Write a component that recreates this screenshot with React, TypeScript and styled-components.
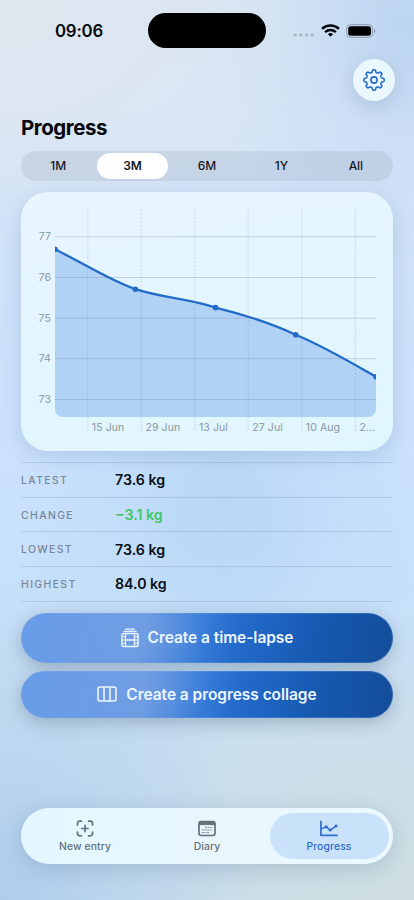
import React from 'react';
import styled, { createGlobalStyle } from 'styled-components';

const GlobalStyle = createGlobalStyle`
  *, *::before, *::after { box-sizing: border-box; }
  html, body { margin: 0; padding: 0; }
  body { font-family: Inter, "Liberation Sans", sans-serif; color: #06090f; }
  button { font: inherit; border: 0; padding: 0; background: none; color: inherit; }
  svg { display: block; flex: none; }
`;

const Screen = styled.div`
  display: flex;
  flex-direction: column;
  width: 414px;
  height: 900px;
  overflow: hidden;
  background:
    radial-gradient(ellipse 330px 240px at 0% 0%, rgba(224, 230, 238, 0.85), rgba(224, 230, 238, 0)),
    radial-gradient(ellipse 210px 240px at 100% 3%, rgba(184, 210, 240, 0.9), rgba(190, 214, 242, 0.35) 55%, rgba(200, 220, 246, 0)),
    radial-gradient(ellipse 200px 220px at 54% 57%, rgba(180, 214, 245, 0.85), rgba(186, 217, 247, 0.35) 60%, rgba(200, 224, 250, 0)),
    radial-gradient(ellipse 270px 320px at 0% 100%, rgba(172, 205, 236, 0.95), rgba(176, 207, 238, 0.45) 55%, rgba(190, 216, 242, 0)),
    radial-gradient(ellipse 360px 270px at 100% 100%, rgba(207, 223, 227, 0.95), rgba(207, 223, 230, 0)),
    linear-gradient(180deg, #d9e6f4 0%, #d8e6f6 13%, #cfe2f8 27%, #cbe1fc 50%, #c7e0f9 65%, #c9dff1 80%, #ccdfec 100%);
`;

const StatusBar = styled.header`
  display: grid;
  grid-template-columns: 148px 118px 1fr;
  height: 48px;
  padding-top: 13px;
`;

const Clock = styled.time`
  padding-left: 55px;
  font-size: 16.8px;
  line-height: 37px;
  font-weight: 600;
  letter-spacing: -0.2px;
`;

const Island = styled.div`
  height: 35px;
  border-radius: 18px;
  background: #000;
`;

const StatusIcons = styled.div`
  display: flex;
  align-items: center;
  gap: 6px;
  height: 35px;
  padding-left: 27px;
`;

const Toolbar = styled.div`
  display: flex;
  justify-content: flex-end;
  height: 64px;
  padding: 11px 19px 0 0;
`;

const RoundButton = styled.button`
  display: flex;
  align-items: center;
  justify-content: center;
  width: 42px;
  height: 42px;
  border-radius: 50%;
  color: #246bc9;
  background: #e9f7ff;
  box-shadow: 0 5px 18px rgba(70, 100, 140, 0.2);
`;

const Content = styled.main`
  display: flex;
  flex-direction: column;
  padding: 0 21px;
`;

const Title = styled.h1`
  margin: 0;
  height: 39px;
  font-size: 20.5px;
  line-height: 32px;
  font-weight: 700;
  letter-spacing: -0.45px;
  color: #05070c;
`;

const Segments = styled.div`
  display: grid;
  grid-template-columns: repeat(5, 1fr);
  height: 30px;
  padding: 2px 0;
  border-radius: 15px;
  background: rgba(120, 130, 150, 0.16);
`;

const Segment = styled.button<{ $selected?: boolean }>`
  margin: 0 1.7px;
  border-radius: 13px;
  font-size: 12px;
  line-height: 26px;
  font-weight: ${(p) => (p.$selected ? 600 : 500)};
  letter-spacing: -0.1px;
  color: #15181e;
  background: ${(p) => (p.$selected ? '#fff' : 'transparent')};
`;

const ChartCard = styled.section`
  height: 259px;
  margin-top: 11px;
  border-radius: 27px;
  background: linear-gradient(170deg, #e7f5ff, #e0f6ff);
  box-shadow: 0 5px 20px rgba(75, 110, 160, 0.2);
`;

const AxisLabel = styled.text`
  font-size: 10.5px;
  letter-spacing: 0.1px;
  fill: #8a979f;
`;

const Stats = styled.dl`
  margin: 11px 0 0;
  border-top: 1px solid rgba(90, 115, 150, 0.2);
`;

const StatRow = styled.div`
  display: grid;
  grid-template-columns: 94px 1fr;
  align-items: center;
  height: 34.7px;
  border-bottom: 1px solid rgba(90, 115, 150, 0.2);
`;

const StatLabel = styled.dt`
  padding-top: 1px;
  font-size: 10.4px;
  font-weight: 500;
  letter-spacing: 1.4px;
  color: #788798;
`;

const StatValue = styled.dd<{ $positive?: boolean }>`
  margin: 0;
  font-size: 14.2px;
  font-weight: 600;
  letter-spacing: 0;
  color: ${(p) => (p.$positive ? '#43c66a' : '#080e17')};
`;

const Actions = styled.div`
  display: flex;
  flex-direction: column;
  gap: 8px;
  margin-top: 11.5px;
`;

const ActionButton = styled.button<{ $height: number; $gap: number }>`
  display: flex;
  align-items: center;
  justify-content: center;
  gap: ${(p) => p.$gap}px;
  height: ${(p) => p.$height}px;
  padding-bottom: 1px;
  border-radius: 25px;
  font-size: 15.5px;
  font-weight: 600;
  letter-spacing: -0.05px;
  color: #edf6ff;
  background:
    radial-gradient(ellipse 60px 40px at 35% 40%, rgba(137, 170, 227, 0.25), rgba(137, 170, 227, 0)),
    linear-gradient(100deg, #689de8 0%, #6c9ce4 22%, #6a9be3 33%, #377bd7 49%, #246bcb 58%, #175bb4 76%, #134d99 100%);
  box-shadow: inset 0 0 0 1px rgba(130, 174, 235, 0.25), 0 5px 17px rgba(65, 87, 108, 0.32);
`;

const TabBar = styled.nav`
  display: grid;
  grid-template-columns: 128px 116px 128px;
  height: 56px;
  margin: auto 21px 36px;
  padding: 5px 0;
  border-radius: 28px;
  background: linear-gradient(100deg, #e3f7ff, #e9f7ff 55%, #edf9ff);
  box-shadow: 0 5px 22px rgba(65, 95, 125, 0.24);
`;

const Tab = styled.button<{ $active?: boolean }>`
  display: flex;
  flex-direction: column;
  align-items: center;
  gap: 2px;
  width: 119px;
  padding-top: 7px;
  justify-self: center;
  border-radius: 23px;
  font-size: 10.4px;
  line-height: 15px;
  font-weight: 500;
  letter-spacing: 0.1px;
  color: ${(p) => (p.$active ? '#2c6dcd' : '#667178')};
  background: ${(p) => (p.$active ? '#cae1fa' : 'transparent')};
`;

const gearOutline = Array.from({ length: 161 }, (_, i) => {
  const angle = (i / 160) * Math.PI * 2;
  const radius = 8.95 + 1.2 * Math.tanh(2.1 * Math.cos(8 * angle)) / Math.tanh(2.1);
  const x = 12 + radius * Math.sin(angle);
  const y = 12 - radius * Math.cos(angle);
  return `${i === 0 ? 'M' : 'L'}${x.toFixed(2)} ${y.toFixed(2)}`;
}).join('');

const GearIcon = () => (
  <svg width="24" height="24" viewBox="0 0 24 24" fill="none" stroke="currentColor" strokeWidth="1.6" strokeLinejoin="round">
    <path d={`${gearOutline}Z`} />
    <circle cx="12" cy="12" r="3.1" />
  </svg>
);

const SignalDots = () => (
  <svg width="22" height="13" viewBox="0 0 22 13" fill="#abb7c5">
    {[0.6, 6.3, 12, 17.7].map((x) => (
      <rect key={x} x={x} y="9.4" width="3.1" height="3.1" rx="1" />
    ))}
  </svg>
);

const WifiIcon = () => (
  <svg width="19" height="13" viewBox="0 0 19 13" fill="none" stroke="#05070c" strokeWidth="2.4">
    <path d="M1 4.9A12.4 12.4 0 0 1 18 4.9" />
    <path d="M4.1 8.1A8 8 0 0 1 14.9 8.1" />
    <path d="M9.5 12.7 6.9 10.2A3.9 3.9 0 0 1 12.1 10.2Z" fill="#05070c" stroke="none" />
  </svg>
);

const BatteryIcon = () => (
  <svg width="30" height="14" viewBox="0 0 30 14">
    <rect x=".6" y=".7" width="26" height="12.6" rx="4" fill="none" stroke="#8c98a6" />
    <rect x="2.2" y="2.3" width="22.8" height="9.4" rx="2.6" fill="#000" />
    <path d="M28 5v4c1.7-.6 1.7-3.4 0-4Z" fill="#8290a0" />
  </svg>
);

const FilmStackIcon = () => (
  <svg width="18" height="20" viewBox="0 0 18 20" fill="none" stroke="currentColor" strokeLinecap="round">
    <path d="M4.6 1.2h8.8M2.9 3.4h12.2" strokeWidth="1.2" />
    <rect x=".9" y="5.5" width="16.2" height="13" rx="1.8" strokeWidth="1.4" />
    <path d="M4.5 5.6v12.8M13.5 5.6v12.8M4.5 12h9" strokeWidth="1.3" />
    <path d="M1 8.7h3.5M1 12h3.5M1 15.3h3.5M13.5 8.7H17M13.5 12H17M13.5 15.3H17" strokeWidth="1" strokeLinecap="butt" />
  </svg>
);

const ColumnsIcon = () => (
  <svg width="20" height="16" viewBox="0 0 20 16" fill="none" stroke="currentColor" strokeWidth="1.6">
    <rect x="1" y="1" width="18" height="14" rx="2" />
    <path d="M7 1v14M13 1v14" />
  </svg>
);

const CaptureIcon = () => (
  <svg width="18" height="17" viewBox="0 0 18 17" fill="none" stroke="currentColor" strokeWidth="1.7" strokeLinecap="round">
    <path d="M1.5 5V3.4Q1.5 1.2 3.7 1.2H5.4M12.6 1.2h1.7q2.2 0 2.2 2.2V5M16.5 12v1.6q0 2.2-2.2 2.2h-1.7M5.4 15.8H3.7q-2.2 0-2.2-2.2V12M9 5.4v6.2M5.9 8.5h6.2" />
  </svg>
);

const DiaryIcon = () => (
  <svg width="18" height="17" viewBox="0 0 18 17" fill="none" stroke="currentColor">
    <rect x="1" y="1.7" width="16" height="13.8" rx="2.2" strokeWidth="1.7" />
    <path d="M1 4.6v-1q0-2 2.2-2h11.6q2.2 0 2.2 2v1Z" fill="currentColor" />
    <path d="M7 7.4h7.5M3.7 10h11M3.7 12.6h7.5" strokeWidth="1" strokeDasharray="2 .7" strokeOpacity=".8" />
  </svg>
);

const TrendIcon = () => (
  <svg width="18" height="17" viewBox="0 0 18 17" fill="none" stroke="currentColor" strokeLinecap="round" strokeLinejoin="round">
    <path d="M.9 1.4v13.9h16.2" strokeWidth="1.7" />
    <path d="M1.2 8.8 6.2 6.8l4 3.3 6-4" strokeWidth="1.4" />
    <g fill="currentColor" stroke="none">
      <circle cx="6.2" cy="6.8" r="1.6" />
      <circle cx="10.2" cy="10" r="1.6" />
      <circle cx="16" cy="6" r="1.6" />
    </g>
  </svg>
);

const weightTicks = [
  { label: '77', y: 44.7 },
  { label: '76', y: 85.5 },
  { label: '75', y: 126.3 },
  { label: '74', y: 166.7 },
  { label: '73', y: 207.5 },
];

const dateTicks = [
  { label: '15 Jun', x: 66.8 },
  { label: '29 Jun', x: 120.4 },
  { label: '13 Jul', x: 173.9 },
  { label: '27 Jul', x: 227.2 },
  { label: '10 Aug', x: 280.8 },
  { label: '2...', x: 334.4 },
];

const readings = [[34, 57.3], [114.4, 97.2], [194.5, 115.6], [274.7, 142.8], [355, 184.8]];

const curve = 'M34 57.3C62 71 88 88 114.4 97.2C141 106 168 106.5 194.5 115.6C222 122.4 249 130.6 274.7 142.8C302 154 329 170 355 184.8';

const WeightChart = () => (
  <svg width="372" height="259" viewBox="0 0 372 259" role="img" aria-label="Weight">
    <defs>
      <clipPath id="plot">
        <path d="M34 0H355V217a8 8 0 0 1-8 8H42a8 8 0 0 1-8-8Z" />
      </clipPath>
    </defs>
    <g clipPath="url(#plot)">
      <path d={`${curve}V225H34Z`} fill="#afd2f5" />
    </g>
    {weightTicks.map((t) => (
      <g key={t.label}>
        <path d={`M34 ${t.y}H355`} stroke="#6f8496" strokeOpacity=".3" />
        <AxisLabel x="30" y={t.y + 3.7} textAnchor="end">{t.label}</AxisLabel>
      </g>
    ))}
    {dateTicks.map((t) => (
      <g key={t.label}>
        <path d={`M${t.x} 16.5V240`} stroke="#6f8496" strokeOpacity=".3" strokeDasharray="2 2" />
        <AxisLabel x={t.x + 4} y="239">{t.label}</AxisLabel>
      </g>
    ))}
    <g clipPath="url(#plot)">
      <path d={curve} fill="none" stroke="#226bca" strokeWidth="2.3" />
      {readings.map(([x, y]) => <circle key={x} cx={x} cy={y} r="2.8" fill="#226bca" />)}
    </g>
  </svg>
);

const ranges = ['1M', '3M', '6M', '1Y', 'All'];

const stats = [
  { label: 'LATEST', value: '73.6 kg' },
  { label: 'CHANGE', value: '−3.1 kg', positive: true },
  { label: 'LOWEST', value: '73.6 kg' },
  { label: 'HIGHEST', value: '84.0 kg' },
];

export default function App() {
  return (
    <>
      <GlobalStyle />
      <Screen>
        <StatusBar>
          <Clock>09:06</Clock>
          <Island />
          <StatusIcons>
            <SignalDots />
            <WifiIcon />
            <BatteryIcon />
          </StatusIcons>
        </StatusBar>
        <Toolbar>
          <RoundButton aria-label="Settings"><GearIcon /></RoundButton>
        </Toolbar>
        <Content>
          <Title>Progress</Title>
          <Segments>
            {ranges.map((range) => <Segment key={range} $selected={range === '3M'}>{range}</Segment>)}
          </Segments>
          <ChartCard><WeightChart /></ChartCard>
          <Stats>
            {stats.map((s) => (
              <StatRow key={s.label}>
                <StatLabel>{s.label}</StatLabel>
                <StatValue $positive={s.positive}>{s.value}</StatValue>
              </StatRow>
            ))}
          </Stats>
          <Actions>
            <ActionButton $height={50} $gap={9}><FilmStackIcon />Create a time-lapse</ActionButton>
            <ActionButton $height={47} $gap={9}><ColumnsIcon />Create a progress collage</ActionButton>
          </Actions>
        </Content>
        <TabBar>
          <Tab><CaptureIcon />New entry</Tab>
          <Tab><DiaryIcon />Diary</Tab>
          <Tab $active><TrendIcon />Progress</Tab>
        </TabBar>
      </Screen>
    </>
  );
}
